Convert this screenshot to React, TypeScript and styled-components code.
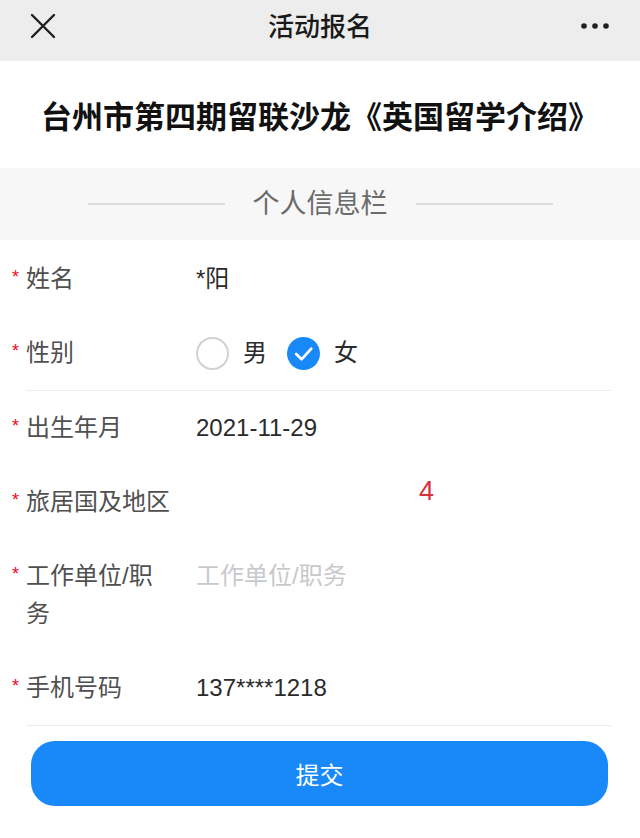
import styled, { createGlobalStyle } from "styled-components";

const GlobalStyle = createGlobalStyle`
  html, body {
    margin: 0;
    padding: 0;
    background: #ffffff;
  }
  body {
    font-family: "Liberation Sans", "Noto Sans CJK SC", sans-serif;
    -webkit-font-smoothing: antialiased;
  }
`;

interface IField {
  label: string;
  value?: string;
  placeholder?: string;
  mark?: string;
}

const fieldsTop: IField[] = [{ label: "姓名", value: "*阳" }];

const fieldsBottom: IField[] = [
  { label: "出生年月", value: "2021-11-29" },
  { label: "旅居国及地区", value: "", mark: "4" },
  { label: "工作单位/职务", placeholder: "工作单位/职务" },
  { label: "手机号码", value: "137****1218" },
];

const CloseIcon = () => (
  <svg width="26" height="26" viewBox="0 0 26 26">
    <path d="M2 2 L24 24 M24 2 L2 24" stroke="#1f1f1f" strokeWidth="2.4" strokeLinecap="round" />
  </svg>
);

const MoreIcon = () => (
  <svg width="30" height="8" viewBox="0 0 30 8">
    <circle cx="4" cy="4" r="2.8" fill="#1f1f1f" />
    <circle cx="15" cy="4" r="2.8" fill="#1f1f1f" />
    <circle cx="26" cy="4" r="2.8" fill="#1f1f1f" />
  </svg>
);

const CheckedIcon = () => (
  <svg width="33" height="33" viewBox="0 0 34 34">
    <circle cx="17" cy="17" r="17" fill="#1989fa" />
    <path d="M9.5 17.5 L15 23 L25 12" stroke="#fff" strokeWidth="2.8" fill="none" strokeLinecap="round" strokeLinejoin="round" />
  </svg>
);

const FieldRow = ({ label, value, placeholder, mark }: IField) => (
  <Field>
    <Required>*</Required>
    <Label>{label}</Label>
    <Value $placeholder={!value && !!placeholder}>{value || placeholder}</Value>
    {mark && <Mark>{mark}</Mark>}
  </Field>
);

const App = () => {
  return (
    <Page>
      <GlobalStyle />
      <NavBar>
        <NavButton>
          <CloseIcon />
        </NavButton>
        <NavTitle>活动报名</NavTitle>
        <NavButton $right>
          <MoreIcon />
        </NavButton>
      </NavBar>

      <Heading>台州市第四期留联沙龙《英国留学介绍》</Heading>

      <SectionHeader>
        <SectionLine />
        <SectionTitle>个人信息栏</SectionTitle>
        <SectionLine />
      </SectionHeader>

      <Form>
        {fieldsTop.map((f) => (
          <FieldRow key={f.label} {...f} />
        ))}
        <Field>
          <Required>*</Required>
          <Label>性别</Label>
          <RadioGroup>
            <RadioOption>
              <RadioCircle />
              <RadioText>男</RadioText>
            </RadioOption>
            <RadioOption>
              <CheckedIcon />
              <RadioText>女</RadioText>
            </RadioOption>
          </RadioGroup>
        </Field>
        <Divider />
        {fieldsBottom.map((f) => (
          <FieldRow key={f.label} {...f} />
        ))}
        <Divider />
      </Form>

      <ButtonWrap>
        <SubmitButton>提交</SubmitButton>
      </ButtonWrap>
    </Page>
  );
};

const Page = styled.div`
  width: 640px;
  min-height: 838px;
  background: #ffffff;
  color: #323233;
`;

const NavBar = styled.div`
  height: 61px;
  background: #ededed;
  display: flex;
  align-items: center;
  justify-content: space-between;
  padding: 0 30px 0 30px;
  box-sizing: border-box;
`;

const NavButton = styled.div<{ $right?: boolean }>`
  width: 60px;
  display: flex;
  align-items: center;
  justify-content: ${({ $right }) => ($right ? "flex-end" : "flex-start")};
  padding-bottom: 10px;
`;

const NavTitle = styled.div`
  font-size: 26px;
  font-weight: 500;
  color: #1a1a1a;
  padding-bottom: 13px;
`;

const Heading = styled.h1`
  margin: 0;
  height: 107px;
  display: flex;
  align-items: center;
  justify-content: center;
  font-size: 31px;
  font-weight: 700;
  color: #111111;
  white-space: nowrap;
`;

const SectionHeader = styled.div`
  height: 72px;
  background: #f7f7f7;
  display: flex;
  align-items: center;
  justify-content: center;
  gap: 28px;
`;

const SectionLine = styled.div`
  width: 137px;
  height: 2px;
  background: #dedede;
`;

const SectionTitle = styled.div`
  font-size: 27px;
  color: #6b6b6b;
  line-height: 1;
`;

const Form = styled.div`
  background: #ffffff;
  padding-top: 2px;
`;

const Field = styled.div`
  position: relative;
  display: flex;
  align-items: flex-start;
  padding: 18px 28px 18px 12px;
  font-size: 24px;
  line-height: 38px;
`;

const Required = styled.span`
  width: 14px;
  flex-shrink: 0;
  color: #ee0a24;
  font-size: 18px;
  line-height: 34px;
`;

const Label = styled.div`
  width: 148px;
  flex-shrink: 0;
  margin-right: 22px;
  color: #505050;
  word-break: break-all;
`;

const Value = styled.div<{ $placeholder?: boolean }>`
  flex: 1;
  color: ${({ $placeholder }) => ($placeholder ? "#c8c9cc" : "#2b2b2b")};
  min-height: 38px;
`;

const Mark = styled.span`
  position: absolute;
  left: 419px;
  top: 7px;
  color: #d7323b;
  font-size: 27px;
  line-height: 38px;
`;

const RadioGroup = styled.div`
  display: flex;
  align-items: center;
  gap: 20px;
  height: 38px;
`;

const RadioOption = styled.div`
  display: flex;
  align-items: center;
  gap: 14px;
`;

const RadioCircle = styled.span`
  width: 29px;
  height: 29px;
  border-radius: 50%;
  border: 2px solid #d0d1d4;
`;

const RadioText = styled.span`
  color: #2b2b2b;
`;

const Divider = styled.div`
  height: 1px;
  background: #ebedf0;
  margin: 0 28px 0 26px;
`;

const ButtonWrap = styled.div`
  padding: 15px 32px 0 31px;
`;

const SubmitButton = styled.button`
  width: 100%;
  height: 65px;
  border: none;
  border-radius: 24px;
  background: #1989fa;
  color: #ffffff;
  font-family: "Liberation Sans", "Noto Sans CJK SC", sans-serif;
  font-size: 24px;
`;

export default App;
